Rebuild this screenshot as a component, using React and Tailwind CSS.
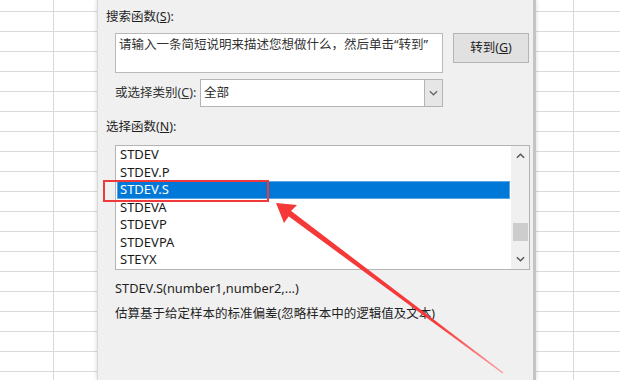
const ROWS = Array.from({ length: 19 });
const FUNCS = ["STDEV", "STDEV.P", "STDEV.S", "STDEVA", "STDEVP", "STDEVPA", "STEYX"];

function SheetGrid() {
  return (
    <div className="flex flex-col w-[620px] h-[380px] overflow-hidden bg-white">
      <div className="flex h-[12px] shrink-0 border-b border-[#dadada]">
        <div className="w-[54px] border-r border-[#dadada]" />
        <div className="w-[520px] border-r border-[#dadada]" />
      </div>
      {ROWS.map((_, i) => (
        <div key={i} className="flex h-[20px] shrink-0 border-b border-[#dadada]">
          <div className="w-[54px] border-r border-[#dadada]" />
          <div className="w-[520px] border-r border-[#dadada]" />
        </div>
      ))}
    </div>
  );
}

function Chevron({ up, className }) {
  return (
    <svg width="10" height="6" viewBox="0 0 10 6" className={className}>
      <path
        d={up ? "M1 5 L5 1 L9 5" : "M1 1 L5 5 L9 1"}
        fill="none"
        stroke="currentColor"
        strokeWidth="1.6"
      />
    </svg>
  );
}

function Dialog() {
  return (
    <div className="absolute left-[97px] top-0 w-[439px] h-[380px] bg-[#f0f0f0] border-l border-[#d8d8d8] border-r-[3px] border-r-[#c4c4c4] shadow-[0_0_4px_rgba(0,0,0,0.18)] text-[#1f1f1f] font-['Noto_Sans','Noto_Sans_CJK_SC',sans-serif]">
      <div className="flex flex-col pt-[7px]">
        <div className="h-[20px] leading-[20px] pl-[8px] text-[12.5px]">
          搜索函数(<span className="underline">S</span>):
        </div>

        <div className="flex mt-[6px] pl-[17px]">
          <div className="w-[328px] h-[40px] bg-white border border-[#b9b9b9] px-[3px] pt-[1px] text-[12.5px] leading-[20px] text-[#333]">
            请输入一条简短说明来描述您想做什么，然后单击“转到”
          </div>
          <div className="ml-[10px] w-[76px] h-[30px] bg-[#e1e1e1] border border-[#b4b4b4] flex items-center justify-center text-[12.5px]">
            转到(<span className="underline">G</span>)
          </div>
        </div>

        <div className="flex items-center mt-[6px] pl-[17px]">
          <div className="w-[85px] text-[12.5px] text-[#333]">
            或选择类别(<span className="underline">C</span>):
          </div>
          <div className="flex w-[243px] h-[28px] bg-white border border-[#b4b4b4]">
            <div className="flex-1 px-[3px] text-[12.5px] leading-[26px]">全部</div>
            <div className="w-[18px] h-full bg-[#e6e6e6] border-l border-[#b4b4b4] flex items-center justify-center text-[#6a6a6a]">
              <Chevron className="w-[9px]" />
            </div>
          </div>
        </div>

        <div className="mt-[10px] h-[20px] leading-[20px] pl-[8px] text-[12.5px]">
          选择函数(<span className="underline">N</span>):
        </div>

        <div className="ml-[17px] mt-[8px] w-[415px] h-[125px] bg-white border border-[#b4b4b4] flex overflow-hidden">
          <div className="flex-1 flex flex-col px-[1px]">
            {FUNCS.map((f) => (
              <div
                key={f}
                className={
                  f === "STDEV.S"
                    ? "h-[17.5px] shrink-0 pl-[2px] text-[13px] leading-[15.5px] bg-[#0078d7] text-white border border-[#5aa7e6]"
                    : "h-[17.5px] shrink-0 pl-[3px] text-[13px] leading-[17.5px] text-[#1a1a1a]"
                }
              >
                {f}
              </div>
            ))}
          </div>
          <div className="w-[18px] h-full bg-[#f0f0f0] flex flex-col items-center text-[#555]">
            <div className="h-[20px] flex items-center justify-center">
              <Chevron up className="w-[9px]" />
            </div>
            <div className="mt-[57px] w-[15px] h-[18px] bg-[#cdcdcd]" />
            <div className="flex-1" />
            <div className="h-[20px] flex items-center justify-center">
              <Chevron className="w-[9px]" />
            </div>
          </div>
        </div>

        <div className="mt-[8px] h-[20px] leading-[20px] pl-[17px] text-[12.8px]">
          STDEV.S(number1,number2,...)
        </div>
        <div className="mt-[6px] h-[20px] leading-[20px] pl-[17px] text-[12.5px]">
          估算基于给定样本的标准偏差(忽略样本中的逻辑值及文本)
        </div>
      </div>
    </div>
  );
}

function Annotation() {
  return (
    <>
      <div className="absolute left-[103px] top-[180px] w-[166px] h-[22px] border-2 border-[#ee3a3a]" />
      <svg className="absolute left-0 top-0 pointer-events-none" width="620" height="380">
        <defs>
          <linearGradient id="fade" x1="276" y1="203" x2="503" y2="373" gradientUnits="userSpaceOnUse">
            <stop offset="0" stopColor="#f53838" />
            <stop offset="0.7" stopColor="#f53838" />
            <stop offset="1" stopColor="#ff9c9c" />
          </linearGradient>
        </defs>
        <polygon points="276,203 297,205 291,211 289,216 284,223" fill="#f53838" />
        <polygon points="290.5,210.5 503.4,372.6 502.6,373.4 287.5,215.5" fill="url(#fade)" />
      </svg>
    </>
  );
}

export default function App() {
  return (
    <div className="relative w-[620px] h-[380px] overflow-hidden">
      <SheetGrid />
      <Dialog />
      <Annotation />
    </div>
  );
}
